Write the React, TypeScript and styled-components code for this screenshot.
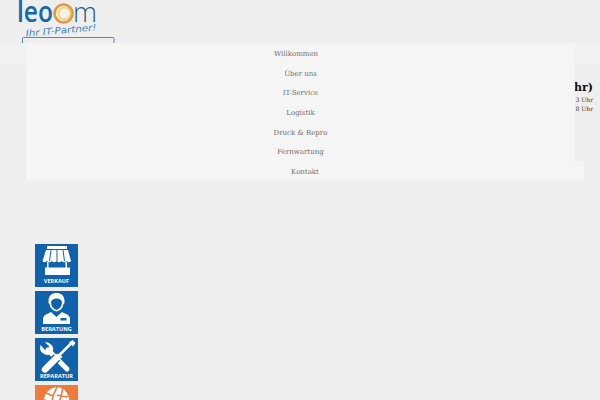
import React from "react";
import styled, { createGlobalStyle } from "styled-components";

const Global = createGlobalStyle`
  html, body { margin: 0; padding: 0; background: #eeeeee; overflow: hidden; }
  body { font-family: "DejaVu Serif", serif; }
`;

const Page = styled.div`
  position: relative;
  width: 600px;
  height: 400px;
  overflow: hidden;
  background: #eeeeee;
  opacity: 0.999;
`;

const LogoRow = styled.header`
  height: 43px;
  padding-left: 18px;
`;

const LogoArt = styled.svg`
  display: block;
  overflow: hidden;
`;

const Bar = styled.div`
  height: 22px;
  background: #f1f1f1;
`;

const Hours = styled.section`
  display: flex;
  flex-direction: column;
  align-items: flex-end;
  padding: 15px 7px 0 0;
  height: 133px;
  box-sizing: border-box;
`;

const HoursTitle = styled.h3`
  margin: 0 0 1px;
  font-size: 11px;
  line-height: 15px;
  font-weight: 700;
  color: #111;
`;

const HoursLine = styled.p`
  margin: 0;
  font-size: 6px;
  line-height: 8.5px;
  color: #333;
`;

const Menu = styled.ul`
  position: absolute;
  top: 43px;
  left: 26px;
  width: 549px;
  margin: 0;
  padding: 0;
  list-style: none;
  background: #f5f5f5;
`;

const MenuItem = styled.li<{ $shift?: number; $wide?: boolean }>`
  height: 19.7px;
  padding-top: 1px;
  line-height: 21.2px;
  font-size: 7px;
  color: #6e6e6e;
  text-align: center;
  background: #f5f5f5;
  width: ${(p) => (p.$wide ? "558px" : "549px")};
  text-indent: ${(p) => p.$shift ?? 0}px;
  box-sizing: border-box;
`;

const Tiles = styled.nav`
  display: flex;
  flex-direction: column;
  gap: 4px;
  margin: 46px 0 0 35px;
  width: 43px;
`;

const Tile = styled.div<{ $color: string }>`
  width: 43px;
  height: 43px;
  flex: none;
  background: ${(p) => p.$color};
  display: flex;
  flex-direction: column;
  align-items: center;
  overflow: hidden;
`;

const TileArt = styled.svg`
  display: block;
  flex: none;
`;

const TileLabel = styled.span`
  font-family: "Open Sans", sans-serif;
  font-weight: 700;
  font-size: 5.6px;
  line-height: 7px;
  color: #fff;
  white-space: nowrap;
`;

const items: { label: string; shift: number; wide?: boolean }[] = [
  { label: "Willkommen", shift: -9 },
  { label: "Über uns", shift: 0 },
  { label: "IT-Service", shift: 0 },
  { label: "Logistik", shift: 0 },
  { label: "Druck & Repro", shift: 0 },
  { label: "Fernwartung", shift: 0 },
  { label: "Kontakt", shift: 0, wide: true },
];

const BLUE = "#0f62ab";
const ORANGE = "#ee7a3c";

function Logo() {
  return (
    <LogoArt width="100" height="43" viewBox="0 0 100 43">
      <text x="-1" y="22" fontFamily="'Open Sans', sans-serif" fontSize="28" fontWeight="600" fill="#1468b0" textLength="36" lengthAdjust="spacingAndGlyphs">leo</text>
      <circle cx="45.500" cy="13.500" r="9" fill="#f6f0dc" stroke="#ec9338" strokeWidth="2.600" />
      <circle cx="46.500" cy="13.500" r="6" fill="#f1f1ee" stroke="#f3d25a" strokeWidth="1.600" />
      <text x="55" y="22" fontFamily="'Open Sans', sans-serif" fontSize="28" fontWeight="300" fill="#1f5f92" textLength="24" lengthAdjust="spacingAndGlyphs">m</text>
      <text x="8" y="36.500" fontFamily="'DejaVu Sans', sans-serif" fontStyle="italic" fontSize="9" fill="#3f86b8" textLength="71" lengthAdjust="spacingAndGlyphs" transform="rotate(-5 8 36.500)">Ihr IT-Partner!</text>
      <path d="M4.500 43V38.300Q4.500 37.500 5.500 37.500H95Q96 37.500 96 38.300V43" fill="none" stroke="#5c8aa6" strokeWidth="1" />
    </LogoArt>
  );
}

function StallIcon() {
  return (
    <TileArt width="43" height="34" viewBox="0 0 43 34">
      <path d="M12 2h20v3H12z" fill="#fff" />
      <path d="M11 6h22l3 11q-2.300 2.500-4.500 0-2.400 2.500-4.800 0-2.500 2.500-5 0-2.500 2.500-5 0-2.400 2.500-4.800 0-2.200 2.500-4.400 0z" fill="#fff" />
      <path d="M16 6l-1.500 11M28 6l1.500 11M22 6v11" stroke={BLUE} strokeWidth="1" />
      <path d="M12 18h1.500v6H12zM30.500 18H32v6h-1.500z" fill="#fff" />
      <path d="M10 23.500h25V31H10z" fill="#fff" />
    </TileArt>
  );
}

function PersonIcon() {
  return (
    <TileArt width="43" height="35" viewBox="0 0 43 35">
      <path d="M14.500 13q-1.500-1-1-3.500C14 4 17 2 21.500 2S29 4 29.500 9.500q.5 2.500-1 3.500-1 6-7 7.500-6-1.500-7-7.500z" fill="#fff" />
      <path d="M16 11q1-3.500 5.500-3.500T27 11q0 6-5.500 8-5.500-2-5.500-8z" fill={BLUE} />
      <path d="M8 33v-5q0-4 5-5.500l3-1.500 5.500 5 5.500-5 3 1.500q5 1.500 5 5.500v5z" fill="#fff" />
      <path d="M25.500 27h6v2.500h-6z" fill={BLUE} />
    </TileArt>
  );
}

function ToolsIcon() {
  return (
    <TileArt width="43" height="35" viewBox="0 0 43 35">
      <path d="M13 12l19 19" stroke="#fff" strokeWidth="5" strokeLinecap="round" />
      <path d="M5.500 7q-1.500 5 2 8t8 1.500l2-2q2-5-1.500-8T10 4.500l4 3.500-.5 3.500-3.500.5z" fill="#fff" />
      <path d="M36 5.500L21 20.500" stroke={BLUE} strokeWidth="5" />
      <path d="M36.500 5L22 19.500" stroke="#fff" strokeWidth="2.500" />
      <path d="M34 4.500l3.500-2.500 3 3-2.500 3.500z" fill="#fff" />
      <path d="M24 15.500l3.500 3.500-1.500 1.500-3.500-3.500z" fill="#fff" />
      <path d="M22 19.500L10 31.500" stroke={BLUE} strokeWidth="9" />
      <path d="M22 19.500L10 31.500" stroke="#fff" strokeWidth="6.500" strokeLinecap="round" />
    </TileArt>
  );
}

function NetIcon() {
  return (
    <TileArt width="43" height="34" viewBox="0 0 43 34">
      <path d="M9 14q2-10 12-12 10 0 13 11 1 10-12 14Q9 26 9 14z" fill="#fff" />
      <path d="M11 8l7 3 4-9M18 11l-1 6-8-2M17 17l7 2 2-8-4-1M26 11l7 1M24 19l-2 7M26 11l2-8" stroke={ORANGE} strokeWidth="1.600" fill="none" />
    </TileArt>
  );
}

export default function App() {
  return (
    <Page>
      <Global />
      <LogoRow>
        <Logo />
      </LogoRow>
      <Bar />
      <Hours>
        <HoursTitle>hr)</HoursTitle>
        <HoursLine>3 Uhr</HoursLine>
        <HoursLine>8 Uhr</HoursLine>
      </Hours>
      <Tiles>
        <Tile $color={BLUE}><StallIcon /><TileLabel>VERKAUF</TileLabel></Tile>
        <Tile $color={BLUE}><PersonIcon /><TileLabel>BERATUNG</TileLabel></Tile>
        <Tile $color={BLUE}><ToolsIcon /><TileLabel>REPARATUR</TileLabel></Tile>
        <Tile $color={ORANGE}><NetIcon /></Tile>
      </Tiles>
      <Menu>
        {items.map((it) => (
          <MenuItem key={it.label} $shift={it.shift} $wide={it.wide}>{it.label}</MenuItem>
        ))}
      </Menu>
    </Page>
  );
}
